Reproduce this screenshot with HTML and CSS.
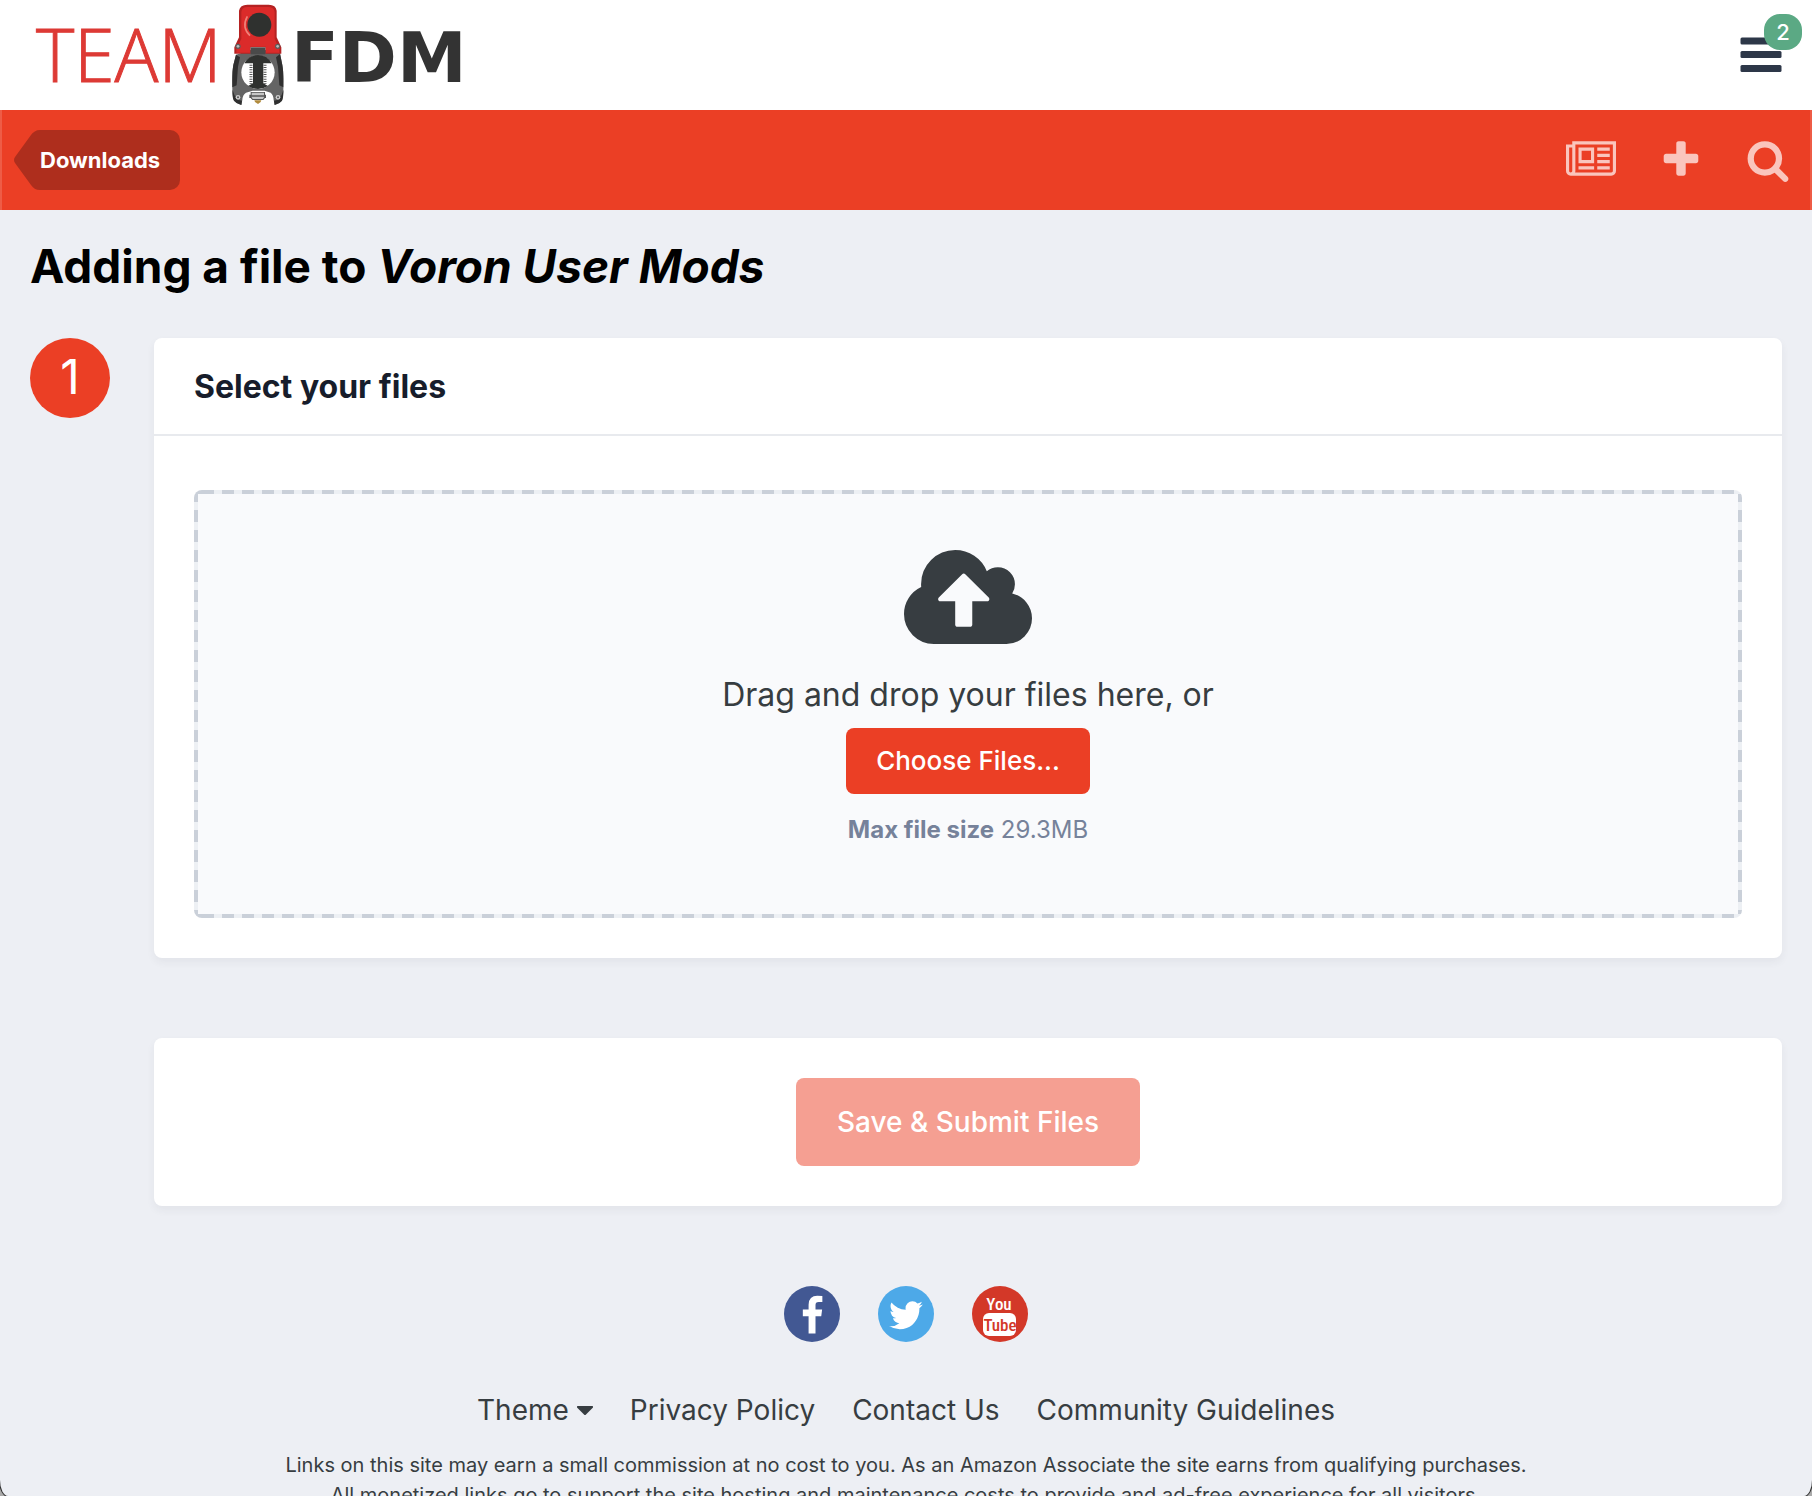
FILE: index.html
```html
<!DOCTYPE html>
<html lang="en">
<head>
<meta charset="utf-8">
<meta name="viewport" content="width=device-width, initial-scale=1">
<title>Adding a file to Voron User Mods - Team FDM</title>
<link rel="stylesheet" href="styles.css">
</head>
<body>
<div class="window">
  <header class="header">
    <a class="logo" href="#" aria-label="Team FDM home">
      <svg class="logo-art" viewBox="0 0 440 110" width="440" height="110">
        <text class="logo-team" x="4" y="82">TEAM</text>
        <text class="logo-fdm" x="259" y="82">FDM</text>
        <!-- printer toolhead -->
        <g transform="translate(178 0) scale(.3333)">
          <path d="M78 164 L70 195 Q66 215 67 250 Q66 292 72 302 Q80 312 94 315 L97 300 Q98 284 108 278 L128 272 H164 L182 278 Q190 284 191 300 L194 315 Q208 312 216 302 Q221 292 220 250 Q221 215 217 195 L210 158 L165 150 H122 Z" fill="#646464"/>
          <path d="M78 164 L70 195 Q66 215 67 262 L80 256 L84 200 L90 172 Z M210 162 L217 195 Q221 215 220 262 L208 256 L204 200 L198 172 Z" fill="#2f2f2f"/>
          <path d="M68 270 Q66 292 72 302 Q80 312 94 315 L96 302 Q76 302 68 270 Z M220 270 Q221 292 216 302 Q208 312 194 315 L192 302 Q212 302 220 270 Z" fill="#2f2f2f"/>
          <circle cx="144" cy="217" r="50" fill="#fff"/>
          <path d="M103 190 Q115 166 144 165 Q173 166 185 190 H160 V250 L174 258 Q144 276 114 258 L129 250 V190 Z" fill="#2f312f"/>
          <path d="M123 194V252M165 194V252" stroke="#555" stroke-width="9" stroke-dasharray="3 4"/>
          <path d="M87 32 Q90 14 112 14 H176 Q198 14 200 32 V112 L214 142 V161 H166 V142 H122 V161 H73 V142 L87 112 Z" fill="#b52222"/>
          <path d="M94 36 Q96 21 112 21 H174 Q192 21 194 36 V116 L208 146 V158 H168 V140 H120 V158 H79 V146 L94 116 Z" fill="#db2b2a"/>
          <path d="M122 142 H166 V163 H122 Z" fill="#4a4a4a"/>
          <path d="M120 107 Q94 82 112 49" fill="none" stroke="#ef8078" stroke-width="5"/>
          <circle cx="148" cy="74" r="36" fill="#2f312f"/>
          <circle cx="84" cy="139" r="8" fill="#5d5d5d"/><circle cx="84" cy="139" r="4" fill="#bbb"/>
          <circle cx="203" cy="139" r="8" fill="#5d5d5d"/><circle cx="203" cy="139" r="4" fill="#bbb"/>
          <circle cx="84" cy="292" r="7" fill="#ccc"/><circle cx="84" cy="292" r="3" fill="#555"/>
          <circle cx="204" cy="292" r="7" fill="#ccc"/><circle cx="204" cy="292" r="3" fill="#555"/>
          <path d="M122 276 H165 V284 H168 V294 H165 L160 300 H127 L122 294 H118 V284 H122 Z" fill="#555"/>
          <path d="M125 278 H162 V286 H125 Z M124 290 H163 L159 297 H128 Z" fill="#c6c6c6"/>
          <path d="M133 301 H154 L152 306 L144 312 L135 306 Z" fill="#b08a3c"/>
        </g>
      </svg>
    </a>
    <button class="menu" type="button" aria-label="Menu, 2 notifications">
      <svg viewBox="0 0 42 36" width="42" height="36"><rect x=".5" y=".5" width="41" height="7" rx="1.500"/><rect x=".5" y="14" width="41" height="7" rx="1.500"/><rect x=".5" y="28" width="41" height="7" rx="1.500"/></svg>
      <span class="badge">2</span>
    </button>
  </header>

  <nav class="navbar" aria-label="Main">
    <a class="back" href="#">
      <svg class="back-tip" viewBox="0 0 26 60" width="26" height="60"><path d="M26 0C22 0 19 2 17 5L1 27Q-1 30 1 33L17 55C19 58 22 60 26 60Z"/></svg>
      <span class="back-label">Downloads</span>
    </a>
    <div class="tools">
      <a href="#" aria-label="All activity"><svg viewBox="0 128 2048 1792" width="50" height="44"><path fill-rule="evenodd" d="M1024 1024h-384v-384h384v384zm128 256v128h-640v-128h640zm0-768v640h-640v-640h640zm640 768v128h-512v-128h512zm0-256v128h-512v-128h512zm0-256v128h-512v-128h512zm0-256v128h-512v-128h512zm-1536 960v-960h-128v960q0 26 19 45t45 19 45-19 19-45zm1664 0v-1088h-1536v1088q0 33-11 64h1483q26 0 45-19t19-45zm128-1216v1216q0 80-56 136t-136 56h-1664q-80 0-136-56t-56-136v-1088h256v-128h1792z"/></svg></a>
      <a href="#" aria-label="Create"><svg viewBox="0 0 1792 1792" width="44" height="44"><path d="M1600 736v192q0 40-28 68t-68 28h-416v416q0 40-28 68t-68 28h-192q-40 0-68-28t-28-68v-416h-416q-40 0-68-28t-28-68v-192q0-40 28-68t68-28h416v-416q0-40 28-68t68-28h192q40 0 68 28t28 68v416h416q40 0 68 28t28 68z"/></svg></a>
      <a href="#" aria-label="Search"><svg viewBox="0 0 1792 1792" width="44" height="44"><path d="M1216 832q0-185-131.5-316.5t-316.5-131.5-316.5 131.5-131.5 316.5 131.5 316.5 316.5 131.5 316.5-131.5 131.5-316.5zm512 832q0 52-38 90t-90 38q-54 0-90-38l-343-342q-179 124-399 124-143 0-273.5-55.5t-225-150-150-225-55.5-273.5 55.5-273.5 150-225 225-150 273.5-55.5 273.5 55.5 225 150 150 225 55.5 273.5q0 220-124 399l343 343q37 37 37 90z"/></svg></a>
    </div>
  </nav>

  <main class="main">
    <h1 class="title">Adding a file to <em>Voron User Mods</em></h1>
    <form class="step">
      <div class="step-number">1</div>
      <div class="step-body">
        <section class="card">
          <h2 class="card-title">Select your files</h2>
          <div class="card-body">
            <div class="dropzone">
              <svg class="cloud" viewBox="0 128 1920 1408" width="128" height="94"><path d="M1280 864q0-14-9-23l-352-352q-9-9-23-9t-23 9l-351 351q-10 12-10 24 0 14 9 23t23 9h224v352q0 13 9.500 22.500t22.500 9.500h192q13 0 22.500-9.500t9.500-22.500v-352h224q13 0 22.500-9.500t9.500-22.500zm640 288q0 159-112.500 271.500t-271.500 112.500h-1088q-185 0-316.500-131.500t-131.500-316.500q0-130 70-240t188-165q-2-30-2-43 0-212 150-362t362-150q156 0 285.500 87t188.500 231q71-62 166-62 106 0 181 75t75 181q0 76-41 138 130 31 213.500 135.500t83.500 238.500z"/></svg>
              <p class="drop-text">Drag and drop your files here, or</p>
              <button class="button choose" type="button">Choose Files...</button>
              <p class="limit"><strong>Max file size</strong> 29.3MB</p>
            </div>
          </div>
        </section>
        <section class="card submit-card">
          <button class="button submit" type="submit" disabled>Save &amp; Submit Files</button>
        </section>
      </div>
    </form>
  </main>

  <footer class="footer">
    <div class="social">
      <a class="facebook" href="#" aria-label="Facebook"><svg viewBox="0 0 56 56" width="56" height="56"><path transform="translate(8 9.800) scale(.0226)" d="M1343 12v264h-157q-86 0-116 36t-30 108v189h293l-39 296h-254v759h-306v-759h-255v-296h255v-218q0-186 104-288.500t277-102.500q147 0 228 12z"/></svg></a>
      <a class="twitter" href="#" aria-label="Twitter"><svg viewBox="0 0 56 56" width="56" height="56"><path transform="translate(8.800 9.500) scale(.0214 .022)" d="M1684 408q-67 98-162 167 1 14 1 42 0 130-38 259.500t-115.500 248.500-184.500 210.500-258 146-323 54.500q-271 0-496-145 35 4 78 4 225 0 401-138-105-2-188-64.500t-114-159.500q33 5 61 5 43 0 85-11-112-23-185.500-111.500t-73.500-205.500v-4q68 38 146 41-66-44-105-115t-39-154q0-88 44-163 121 149 294.500 238.500t371.500 99.500q-8-38-8-74 0-134 94.500-228.500t228.500-94.500q140 0 236 102 109-21 205-78-37 115-142 178 93-10 186-50z"/></svg></a>
      <a class="youtube" href="#" aria-label="YouTube"><svg viewBox="0 0 56 56" width="56" height="56"><text x="27" y="24">You</text><rect x="11" y="27" width="33" height="23" rx="6"/><text class="tube" x="28" y="45">Tube</text></svg></a>
    </div>
    <nav class="footer-links" aria-label="Footer">
      <a class="theme" href="#">Theme <svg class="caret" viewBox="0 0 16 9" width="16" height="9"><path d="M1 0H15Q17 0 15.500 2L9 8.500Q8 9.500 7 8.500L.5 2Q-1 0 1 0Z"/></svg></a>
      <a href="#">Privacy Policy</a>
      <a href="#">Contact Us</a>
      <a href="#">Community Guidelines</a>
    </nav>
    <p class="legal">Links on this site may earn a small commission at no cost to you. As an Amazon Associate the site earns from qualifying purchases.<br>All monetized links go to support the site hosting and maintenance costs to provide and ad-free experience for all visitors.</p>
  </footer>
</div>
</body>
</html>
```
FILE: styles.css
```css
* { box-sizing: border-box; }
html { background: #aaa; }
body {
  margin: 0;
  font-family: Inter, "Liberation Sans", sans-serif;
  color: #373d41;
}
h1, h2, p { margin: 0; }
a { color: inherit; text-decoration: none; }
svg { display: block; }
button { font-family: inherit; border: 0; }

.window {
  height: 100vh;
  overflow: hidden;
  background: #edeff4;
  border-radius: 0 0 8px 8px / 0 0 16px 16px;
  box-shadow: 0 0 0 1px #333;
}

.header {
  display: flex;
  justify-content: space-between;
  align-items: center;
  height: 110px;
  padding: 0 30px 0 32px;
  background: #fff;
}
.logo-team {
  font: 300 73px "Open Sans", sans-serif;
  fill: #dd3a35;
  stroke: #dd3a35;
  stroke-width: 1px;
}
.logo-fdm { font: 700 70px "DejaVu Sans", sans-serif; fill: #333; }
.menu {
  position: relative;
  padding: 0;
  background: none;
}
.menu svg { fill: #2d3748; }
.badge {
  position: absolute;
  top: -23px;
  right: -20px;
  width: 38px;
  height: 36px;
  border-radius: 16px;
  background: #5ba984;
  color: #fff;
  font-size: 22px;
  font-weight: 500;
  line-height: 36px;
  text-align: center;
}

.navbar {
  display: flex;
  justify-content: space-between;
  align-items: center;
  height: 100px;
  padding: 0 20px 0 12px;
  border: solid #ee5c46;
  border-width: 0 2px;
  background: #eb3f25;
}
.back { display: flex; }
.back-tip { fill: #ae2e1d; }
.back-label {
  height: 60px;
  padding-right: 20px;
  border-radius: 0 10px 10px 0;
  background: #ae2e1d;
  color: #fff;
  font-size: 22px;
  font-weight: 700;
  line-height: 60px;
}
.tools { display: flex; gap: 43px; fill: #fac5bd; }

.main { padding: 20px 30px 0; }
.title {
  color: #000;
  font-size: 46px;
  font-weight: 700;
  line-height: 72px;
}
.step { display: flex; gap: 44px; padding-top: 36px; }
.step-number {
  flex: none;
  width: 80px;
  height: 80px;
  border-radius: 50%;
  background: #eb3f25;
  color: #fff;
  font-size: 48px;
  line-height: 78px;
  text-align: center;
}
.step-body {
  flex: 1;
  display: flex;
  flex-direction: column;
  gap: 80px;
}
.card {
  border-radius: 8px;
  background: #fff;
  box-shadow: 0 4px 8px rgba(45, 55, 72, .06);
}
.card-title {
  padding: 25px 40px 23px;
  border-bottom: 2px solid #e8eaee;
  color: #171d2b;
  font-size: 32px;
  font-weight: 700;
  line-height: 48px;
}
.card-body { padding: 54px 40px 40px; }
.dropzone {
  --dash: #cad0d9 0 12px, #edf0f4 12px 20px;
  display: flex;
  flex-direction: column;
  align-items: center;
  padding: 60px 24px 70px;
  border-radius: 8px;
  background:
    repeating-linear-gradient(90deg, var(--dash)) 8px 0 / 100% 4px repeat-x,
    repeating-linear-gradient(90deg, var(--dash)) 8px 100% / 100% 4px repeat-x,
    repeating-linear-gradient(var(--dash)) 0 0 / 4px 100% repeat-y,
    repeating-linear-gradient(var(--dash)) 100% 0 / 4px 100% repeat-y,
    #f9fafc;
}
.cloud { fill: #373d41; }
.drop-text { padding-top: 31px; font-size: 32px; line-height: 40px; }
.button {
  border-radius: 8px;
  background: #eb3f25;
  color: #fff;
  font-weight: 500;
}
.choose {
  margin-top: 13px;
  padding: 0 30px;
  font-size: 26px;
  line-height: 66px;
}
.limit {
  padding-top: 18px;
  color: #76829a;
  font-size: 24px;
  line-height: 36px;
}
.submit-card { display: flex; justify-content: center; padding: 40px; }
.submit {
  padding: 0 41px;
  background: #f59f92;
  font-size: 28px;
  line-height: 88px;
}

.footer {
  display: flex;
  flex-direction: column;
  align-items: center;
  padding-top: 80px;
}
.social { display: flex; gap: 38px; fill: #fff; }
.social a { border-radius: 50%; }
.facebook { background: #425893; }
.twitter { background: #4da9e8; }
.youtube { background: #d33828; }
.youtube text {
  font: 500 17px "Roboto Condensed", Roboto, sans-serif;
  text-anchor: middle;
}
.youtube .tube { fill: #d33828; }
.footer-links {
  display: flex;
  gap: 37px;
  padding-top: 46px;
  font-size: 28px;
  line-height: 44px;
}
.theme { display: flex; align-items: center; gap: 8px; }
.caret { fill: #373d41; }
.legal {
  padding-top: 18px;
  font-size: 20px;
  line-height: 30px;
  text-align: center;
}
```
